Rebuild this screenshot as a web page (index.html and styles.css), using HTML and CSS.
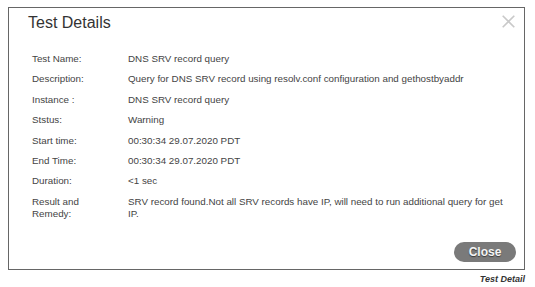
FILE: index.html
```html
<!DOCTYPE html>
<html lang="en">
<head>
<meta charset="utf-8">
<title>Test Details</title>
<link rel="stylesheet" href="styles.css">
</head>
<body>
<div class="page">
  <div class="dialog">
    <h1 class="title">Test Details</h1>
    <button class="dismiss" aria-label="Close">
      <svg viewBox="0 0 13 13" width="13" height="13"><path d="M0.7 0.7 L12.3 12.3 M12.3 0.7 L0.7 12.3" stroke="#c9c9c9" stroke-width="1.6" fill="none"/></svg>
    </button>
    <div class="rows">
      <div class="row"><div class="label">Test Name:</div><div class="value">DNS SRV record query</div></div>
      <div class="row"><div class="label">Description:</div><div class="value">Query for DNS SRV record using resolv.conf configuration and gethostbyaddr</div></div>
      <div class="row"><div class="label">Instance :</div><div class="value">DNS SRV record query</div></div>
      <div class="row"><div class="label">Ststus:</div><div class="value">Warning</div></div>
      <div class="row"><div class="label">Start time:</div><div class="value">00:30:34 29.07.2020 PDT</div></div>
      <div class="row"><div class="label">End Time:</div><div class="value">00:30:34 29.07.2020 PDT</div></div>
      <div class="row"><div class="label">Duration:</div><div class="value">&lt;1 sec</div></div>
      <div class="row"><div class="label">Result and Remedy:</div><div class="value">SRV record found.Not all SRV records have IP, will need to run additional query for get IP.</div></div>
    </div>
    <div class="actions"><button class="close-btn">Close</button></div>
  </div>
  <div class="caption">Test Detail</div>
</div>
</body>
</html>
```
FILE: styles.css
```css
html, body {
  margin: 0;
  padding: 0;
  background: #ffffff;
}
body {
  font-family: "Liberation Sans", Arial, sans-serif;
  color: #444444;
}
.page {
  padding: 7px 0 0 8px;
  width: 517px;
}
.dialog {
  box-sizing: border-box;
  position: relative;
  width: 517px;
  height: 263px;
  border: 1px solid #666666;
  display: flex;
  flex-direction: column;
  padding: 0 8px 7px 19px;
}
.title {
  margin: 5px 0 0 0;
  font-size: 16px;
  line-height: 20px;
  font-weight: normal;
  color: #333333;
}
.dismiss {
  position: absolute;
  top: 7px;
  right: 9px;
  width: 13px;
  height: 13px;
  padding: 0;
  border: 0;
  background: transparent;
  display: block;
}
.dismiss svg {
  display: block;
}
.rows {
  margin-top: 16px;
  padding: 0 4px 0 4px;
  font-size: 9.8px;
  line-height: 12.4px;
}
.row {
  display: grid;
  grid-template-columns: 96px 1fr;
  padding: 4px 0;
}
.label {
  padding-right: 10px;
}
.value {
  padding-right: 0;
}
.actions {
  margin-top: auto;
  display: flex;
  justify-content: flex-end;
}
.close-btn {
  width: 62px;
  height: 20px;
  border: 0;
  border-radius: 10px;
  background: #7a7a7a;
  color: #f4f4f4;
  font-family: "Liberation Sans", Arial, sans-serif;
  font-weight: bold;
  font-size: 12px;
  padding: 0;
  text-shadow: 0 1px 1px #3a3a3a;
}
.caption {
  text-align: right;
  font-size: 9px;
  line-height: 11px;
  font-weight: bold;
  font-style: italic;
  color: #333333;
  margin-top: 4px;
}
```
